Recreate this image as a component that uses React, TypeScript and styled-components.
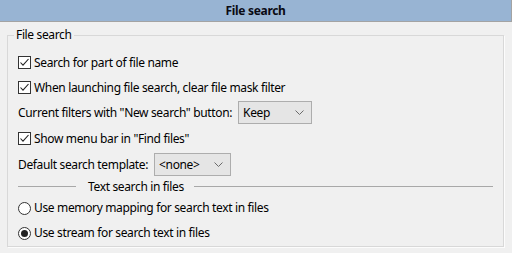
import React from "react";
import styled, { createGlobalStyle } from "styled-components";

const GlobalStyle = createGlobalStyle`
  html, body {
    margin: 0;
    padding: 0;
    background: #f0f0f0;
  }
  body {
    font-family: "Noto Sans", "Open Sans", sans-serif;
    font-size: 12px;
    letter-spacing: -0.35px;
    color: #000;
  }
`;

const Page = styled.div`
  width: 512px;
  height: 253px;
  background: #f0f0f0;
  overflow: hidden;
`;

const Header = styled.div`
  background: #98b4d3;
  border-bottom: 1px solid #a3a3a3;
  border-right: 1px solid #a3a3a3;
  box-sizing: border-box;
  height: 22px;
  display: flex;
  align-items: center;
  justify-content: center;
  font-weight: bold;
  font-size: 12px;
  letter-spacing: -0.3px;
  color: #0a0a14;
`;

const Group = styled.fieldset`
  margin: 5px 8px 0 7px;
  padding: 7px 0 0 10px;
  border: 1px solid #d8d8d8;
  box-shadow: 1px 1px 0 #fcfcfc;
  height: 220px;
  box-sizing: border-box;
  display: flex;
  flex-direction: column;
`;

const Legend = styled.legend`
  margin-left: -4px;
  padding: 0 2px;
  line-height: 16px;
`;

const Row = styled.div<{ $h: number }>`
  height: ${({ $h }) => $h}px;
  display: flex;
  align-items: center;
  white-space: nowrap;
`;

const Box = styled.span`
  width: 13px;
  height: 13px;
  box-sizing: border-box;
  border: 1px solid #333;
  background: #fff;
  display: inline-flex;
  align-items: center;
  justify-content: center;
  margin-right: 3px;
  flex: none;
`;

const Round = styled(Box)`
  border-radius: 50%;
`;

const Dot = styled.span`
  width: 7px;
  height: 7px;
  border-radius: 50%;
  background: #222;
`;

const Label = styled.span`
  line-height: 16px;
`;

const Select = styled.div<{ $w: number }>`
  width: ${({ $w }) => $w}px;
  height: 23px;
  box-sizing: border-box;
  border: 1px solid #adadad;
  background: #e5e5e5;
  margin-left: 6px;
  padding: 0 7px 0 4px;
  display: flex;
  align-items: center;
  justify-content: space-between;
`;

const Separator = styled.div`
  display: flex;
  align-items: center;
  width: 475px;
`;

const Line = styled.span<{ $w?: number }>`
  height: 1px;
  background: #a8a8a8;
  ${({ $w }) => ($w ? `width: ${$w}px; flex: none;` : "flex: 1;")}
`;

const SepText = styled.span`
  margin: 0 10px 0 12px;
`;

const Check = ({ label }: { label: string }) => (
  <>
    <Box>
      <svg width="11" height="11" viewBox="0 0 11 11">
        <polyline points="1.5,5.5 4,8.2 9.5,2" fill="none" stroke="#222" strokeWidth="1.1" />
      </svg>
    </Box>
    <Label>{label}</Label>
  </>
);

const Radio = ({ label, on }: { label: string; on?: boolean }) => (
  <>
    <Round>{on && <Dot />}</Round>
    <Label>{label}</Label>
  </>
);

const Chevron = () => (
  <svg width="9" height="6" viewBox="0 0 9 6">
    <polyline points="0.5,0.5 4.5,4.5 8.5,0.5" fill="none" stroke="#6a6a6a" strokeWidth="1" />
  </svg>
);

export default function App() {
  return (
    <Page>
      <GlobalStyle />
      <Header>File search</Header>
      <Group>
        <Legend>File search</Legend>
        <Row $h={25}>
          <Check label="Search for part of file name" />
        </Row>
        <Row $h={25}>
          <Check label="When launching file search, clear file mask filter" />
        </Row>
        <Row $h={25}>
          <Label>Current filters with "New search" button:</Label>
          <Select $w={74}>
            <span>Keep</span>
            <Chevron />
          </Select>
        </Row>
        <Row $h={27}>
          <Check label={'Show menu bar in "Find files"'} />
        </Row>
        <Row $h={25}>
          <Label>Default search template:</Label>
          <Select $w={77}>
            <span>&lt;none&gt;</span>
            <Chevron />
          </Select>
        </Row>
        <Row $h={18}>
          <Separator>
            <Line $w={58} />
            <SepText>Text search in files</SepText>
            <Line />
          </Separator>
        </Row>
        <Row $h={26}>
          <Radio label="Use memory mapping for search text in files" />
        </Row>
        <Row $h={24}>
          <Radio label="Use stream for search text in files" on />
        </Row>
      </Group>
    </Page>
  );
}
